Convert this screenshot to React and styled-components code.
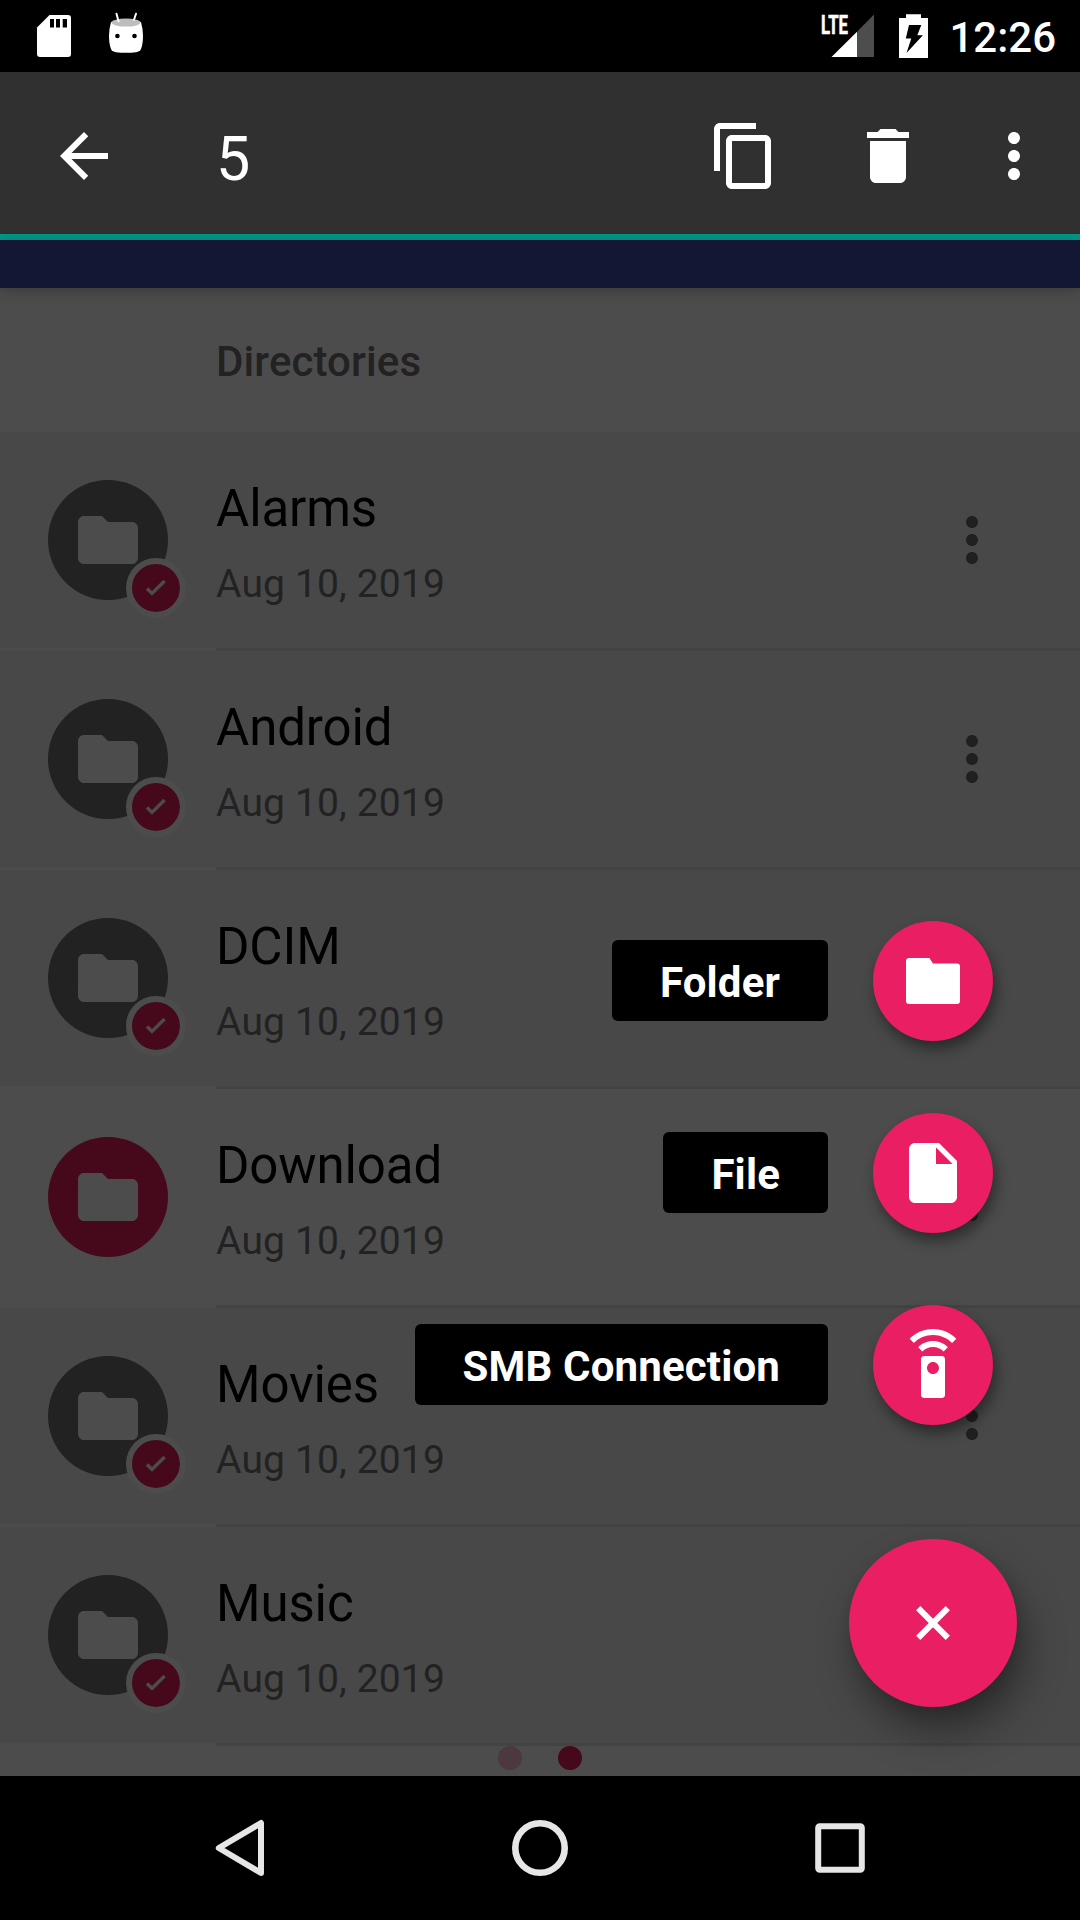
import React from "react";
import styled, { createGlobalStyle } from "styled-components";

const GlobalStyle = createGlobalStyle`
  *, *::before, *::after { box-sizing: border-box; }
  body { margin: 0; background: #000; }
  svg { display: block; overflow: visible; }
`;

const Screen = styled.div`
  position: relative;
  display: flex;
  flex-direction: column;
  width: 1080px;
  height: 1920px;
  overflow: hidden;
  background: #4c4c4c;
  color: #fff;
  font-family: Roboto, "Noto Sans", sans-serif;
`;

const StatusBar = styled.header`
  display: flex;
  flex: none;
  align-items: flex-start;
  height: 72px;
  padding: 12px 24px 0 36px;
  background: #000;
`;

const StatusGroup = styled.div`
  display: flex;
  gap: ${(p) => p.$gap}px;
`;

const StatusSpacer = styled.div`
  flex: 1;
`;

const Clock = styled.time`
  margin-left: -4px;
  font-size: 42px;
  font-weight: 500;
  line-height: 51px;
  white-space: nowrap;
`;

const ActionBar = styled.div`
  display: flex;
  flex: none;
  align-items: center;
  height: 168px;
  padding: 6px 30px 0 48px;
  border-bottom: 6px solid #009688;
  background: #303030;
`;

const ActionCount = styled.h1`
  flex: 1;
  margin: 5px 0 0 96px;
  font-size: 61px;
  font-weight: 400;
  line-height: 70px;
`;

const Actions = styled.div`
  display: flex;
  gap: 72px;
`;

const OverflowAction = styled.div`
  margin-left: -18px;
`;

const TabStrip = styled.div`
  position: relative;
  z-index: 1;
  flex: none;
  height: 48px;
  background: #141733;
  box-shadow: 0 3px 12px rgba(0, 0, 0, 0.24);
`;

const Listing = styled.main`
  flex: 1;
  min-height: 0;
  overflow: hidden;
`;

const SectionTitle = styled.h2`
  height: 144px;
  margin: 0;
  padding-left: 216px;
  color: #222;
  font-size: 42px;
  font-weight: 500;
  letter-spacing: 0.1px;
  line-height: 144px;
  padding-top: 2px;
`;

const Row = styled.div`
  display: flex;
  height: 216px;
  padding: 48px 72px 0 48px;
  background: ${(p) => (p.$selected ? "#484848" : "#4c4c4c")};
`;

const Divider = styled.div`
  height: 3px;
  margin-left: 216px;
  background: #434343;
`;

const Avatar = styled.div`
  position: relative;
  display: flex;
  flex: none;
  align-items: center;
  justify-content: center;
  width: 120px;
  height: 120px;
  border-radius: 50%;
  background: ${(p) => (p.$selected ? "#222" : "#46081b")};
  color: #4c4c4c;
`;

const CheckBadge = styled.div`
  position: absolute;
  right: -18px;
  bottom: -18px;
  display: flex;
  align-items: center;
  justify-content: center;
  width: 60px;
  height: 60px;
  border: 6px solid #4c4c4c;
  border-radius: 50%;
  background: #46081b;
  background-clip: padding-box;
`;

const RowText = styled.div`
  flex: 1;
  margin-left: 48px;
  margin-top: -1px;
`;

const RowName = styled.div`
  color: #000;
  font-size: 51px;
  letter-spacing: -0.12px;
  line-height: 60px;
`;

const RowDate = styled.div`
  margin-top: 22px;
  color: #222;
  font-size: 39px;
  letter-spacing: 0.15px;
  line-height: 46px;
`;

const RowMenu = styled.div`
  margin-top: 24px;
  color: #202020;
`;

const PageDots = styled.div`
  position: absolute;
  right: 0;
  bottom: 150px;
  left: 0;
  display: flex;
  justify-content: center;
  gap: 36px;
`;

const PageDot = styled.i`
  width: 24px;
  height: 24px;
  border-radius: 50%;
  background: ${(p) => (p.$active ? "#46081b" : "#4b393e")};
`;

const SpeedDial = styled.div`
  position: absolute;
  right: 63px;
  bottom: 213px;
  display: flex;
  flex-direction: column;
  align-items: flex-end;
  z-index: 2;
`;

const DialItem = styled.div`
  display: flex;
  align-items: center;
  gap: 51px;
  height: 120px;
  margin: 0 24px 72px 0;
  gap: 45px;

  &:last-of-type {
    margin-bottom: 114px;
  }
`;

const DialLabel = styled.span`
  height: 81px;
  margin-top: -1px;
  padding: 2px 48px 0;
  border-radius: 6px;
  background: #000;
  font-size: 42px;
  font-weight: 700;
  letter-spacing: 0.15px;
  line-height: 81px;
  white-space: nowrap;
`;

const Fab = styled.button`
  display: flex;
  align-items: center;
  justify-content: center;
  width: ${(p) => p.$size}px;
  height: ${(p) => p.$size}px;
  padding: 0;
  border: 0;
  border-radius: 50%;
  background: #e91e63;
  color: #fff;
  box-shadow: ${(p) =>
    p.$size > 120
      ? "8px 24px 40px rgba(0,0,0,.38), 2px 6px 14px rgba(0,0,0,.12)"
      : "3px 8px 14px rgba(0,0,0,.42)"};
`;

const NavBar = styled.nav`
  display: grid;
  flex: none;
  grid-template-columns: repeat(3, 300px);
  place-content: center;
  place-items: center;
  height: 144px;
  background: #000;
`;

const paths = {
  back: "M20 11H7.83l5.59-5.59L12 4l-8 8 8 8 1.41-1.41L7.83 13H20v-2z",
  copy: "M16 1H4c-1.1 0-2 .9-2 2v14h2V3h12V1zm3 4H8c-1.1 0-2 .9-2 2v14c0 1.1.9 2 2 2h11c1.1 0 2-.9 2-2V7c0-1.1-.9-2-2-2zm0 16H8V7h11v14z",
  trash: "M6 19c0 1.1.9 2 2 2h8c1.1 0 2-.9 2-2V7H6v12zM19 4h-3.5l-1-1h-5l-1 1H5v2h14V4z",
  more: "M12 8c1.1 0 2-.9 2-2s-.9-2-2-2-2 .9-2 2 .9 2 2 2zm0 2c-1.1 0-2 .9-2 2s.9 2 2 2 2-.9 2-2-.9-2-2-2zm0 6c-1.1 0-2 .9-2 2s.9 2 2 2 2-.9 2-2-.9-2-2-2z",
  folder: "M10 4H4c-1.1 0-1.99.9-1.99 2L2 18c0 1.1.9 2 2 2h16c1.1 0 2-.9 2-2V8c0-1.1-.9-2-2-2h-8l-2-2z",
  newFolder: "M4 4.33H10.8L12 6.17H20Q21 6.17 21 7.17V18.67Q21 19.67 20 19.67H4Q3 19.67 3 18.67V5.33Q3 4.33 4 4.33Z",
  file: "M6 2c-1.1 0-1.99.9-1.99 2L4 20c0 1.1.89 2 1.99 2H18c1.1 0 2-.9 2-2V8l-6-6H6zm7 7V3.5L18.5 9H13z",
  remote:
    "M15 9H9c-.55 0-1 .45-1 1v12c0 .55.45 1 1 1h6c.55 0 1-.45 1-1V10c0-.55-.45-1-1-1zm-3 6c-1.1 0-2-.9-2-2s.9-2 2-2 2 .9 2 2-.9 2-2 2zM7.05 6.05l1.41 1.41C9.37 6.56 10.62 6 12 6s2.63.56 3.54 1.46l1.41-1.41C15.68 4.78 13.93 4 12 4s-3.68.78-4.95 2.05zM12 0C8.96 0 6.21 1.23 4.22 3.22l1.41 1.41C7.26 3.01 9.51 2 12 2s4.74 1.01 6.36 2.64l1.41-1.41C17.79 1.23 15.04 0 12 0z",
};

function Icon({ name, size = 72 }) {
  return (
    <svg width={size} height={size} viewBox="0 0 24 24" fill="currentColor">
      <path d={paths[name]} />
    </svg>
  );
}

function SdCardIcon() {
  return (
    <svg width="36" height="48" viewBox="36 12 36 48">
      <path fill="#fff" d="M49.5 15H68Q71 15 71 18V54Q71 57 68 57H40Q37 57 37 54V27.5Z" />
      <path d="M50 19h4v8.5h-4zM56 19h4v8.5h-4zM62.7 19h4.3v8.5h-4.3z" />
    </svg>
  );
}

function RobotIcon() {
  return (
    <svg width="36" height="48" viewBox="108 12 36 48">
      <path fill="#fff" d="M111 22Q126 17 141 22Q143 29 143 36Q143 44 141 49Q140 51.5 136 52.2Q126 53.5 116 52.2Q112 51.5 111 49Q109 44 109 36Q109 29 111 22Z" />
      <ellipse cx="126" cy="22.6" rx="14.5" ry="4" fill="#bdbdbd" />
      <path stroke="#fff" strokeWidth="2" strokeLinecap="round" d="M116.5 13.8l2 7.4M136 13.8l-2 6" />
      <circle cx="117.4" cy="36" r="2.3" />
      <circle cx="134.5" cy="36" r="2.3" />
    </svg>
  );
}

function SignalIcon() {
  return (
    <svg width="54" height="48" viewBox="821 12 54 48">
      <path fill="#4d4d4d" d="M857 31.7L874 14.5V57H857z" />
      <path fill="#fff" d="M831.5 57L857 31.7V57z" />
      <text x="821" y="33.6" fill="#fff" stroke="#fff" strokeWidth="0.6" fontSize="26" fontWeight="700" textLength="27" lengthAdjust="spacingAndGlyphs">
        LTE
      </text>
    </svg>
  );
}

function BatteryIcon() {
  return (
    <svg width="30" height="48" viewBox="899 12 30 48">
      <path fill="#fff" d="M906 14.2h15V18h7v40H899V18h7z" />
      <path d="M909 25h12.3l-4 10.2h5.6L906.5 53l4.8-14.5h-5.5z" />
    </svg>
  );
}

function CheckIcon() {
  return (
    <svg width="28" height="28" viewBox="0 0 28 28">
      <path d="M5 14.4l5 5L22.6 7" fill="none" stroke="#4c4c4c" strokeWidth="3.5" />
    </svg>
  );
}

function CloseIcon() {
  return (
    <svg width="72" height="72" viewBox="0 0 72 72">
      <path d="M21.2 21.2l29.6 29.6M50.8 21.2L21.2 50.8" fill="none" stroke="#fff" strokeWidth="6" />
    </svg>
  );
}

const directories = [
  { name: "Alarms", selected: true },
  { name: "Android", selected: true },
  { name: "DCIM", selected: true },
  { name: "Download", selected: false },
  { name: "Movies", selected: true },
  { name: "Music", selected: true },
];

const dialItems = [
  { label: "Folder", icon: "newFolder" },
  { label: "File", icon: "file" },
  { label: "SMB Connection", icon: "remote" },
];

function DirectoryRow({ name, selected }) {
  return (
    <>
      <Row $selected={selected}>
        <Avatar $selected={selected}>
          <Icon name="folder" />
          {selected && (
            <CheckBadge>
              <CheckIcon />
            </CheckBadge>
          )}
        </Avatar>
        <RowText>
          <RowName>{name}</RowName>
          <RowDate>Aug 10, 2019</RowDate>
        </RowText>
        <RowMenu>
          <Icon name="more" />
        </RowMenu>
      </Row>
      <Divider />
    </>
  );
}

export default function App() {
  return (
    <Screen>
      <GlobalStyle />
      <StatusBar>
        <StatusGroup $gap={36}>
          <SdCardIcon />
          <RobotIcon />
        </StatusGroup>
        <StatusSpacer />
        <StatusGroup $gap={24}>
          <SignalIcon />
          <BatteryIcon />
          <Clock>12:26</Clock>
        </StatusGroup>
      </StatusBar>

      <ActionBar>
        <Icon name="back" />
        <ActionCount>5</ActionCount>
        <Actions>
          <Icon name="copy" />
          <Icon name="trash" />
          <OverflowAction>
            <Icon name="more" />
          </OverflowAction>
        </Actions>
      </ActionBar>
      <TabStrip />

      <Listing>
        <SectionTitle>Directories</SectionTitle>
        {directories.map((d) => (
          <DirectoryRow key={d.name} {...d} />
        ))}
      </Listing>

      <PageDots>
        <PageDot />
        <PageDot $active />
      </PageDots>

      <SpeedDial>
        {dialItems.map((item) => (
          <DialItem key={item.label}>
            <DialLabel>{item.label}</DialLabel>
            <Fab $size={120}>
              <Icon name={item.icon} />
            </Fab>
          </DialItem>
        ))}
        <Fab $size={168}>
          <CloseIcon />
        </Fab>
      </SpeedDial>

      <NavBar>
        <svg width="72" height="72" viewBox="204 1812 72 72">
          <path d="M261 1823V1873L218.8 1848Z" fill="none" stroke="#e6e6e6" strokeWidth="6" strokeLinejoin="round" />
        </svg>
        <svg width="72" height="72" viewBox="0 0 72 72">
          <circle cx="36" cy="36" r="24.7" fill="none" stroke="#e6e6e6" strokeWidth="6.6" />
        </svg>
        <svg width="72" height="72" viewBox="0 0 72 72">
          <rect x="14.2" y="14.2" width="43.6" height="43.6" rx="1.5" fill="none" stroke="#e6e6e6" strokeWidth="6" />
        </svg>
      </NavBar>
    </Screen>
  );
}
